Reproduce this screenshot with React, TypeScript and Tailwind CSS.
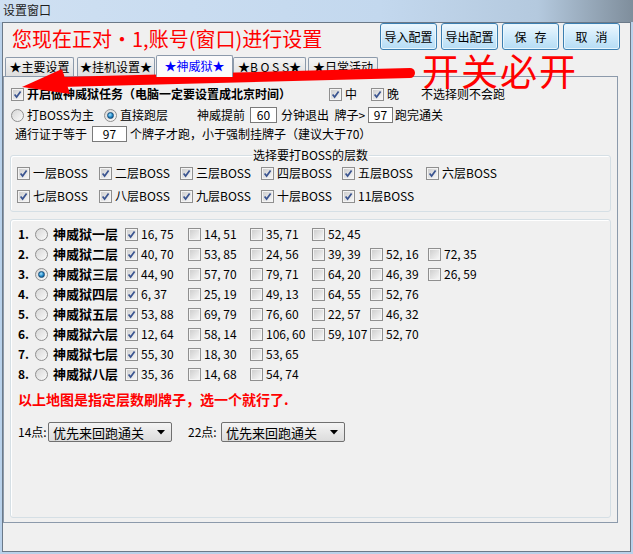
import React from 'react';

// small win7-ish controls
const Check = ({ checked }: { checked?: boolean }) => (
  <span className="relative inline-flex h-[13px] w-[13px] shrink-0 border border-[#8f8f8f] bg-[#f4f4f4] p-[1px]">
    <span className="block h-full w-full bg-linear-to-br from-[#cfcfcf] to-[#f6f6f6]" />
    {checked && (
      <svg className="absolute left-[1px] top-[1px]" width="9" height="9" viewBox="0 0 9 9">
        <path d="M1.6 4.4 L3.6 7 L7.6 1.4" fill="none" stroke="#3a5490" strokeWidth="1.7" />
      </svg>
    )}
  </span>
);

const Radio = ({ on }: { on?: boolean }) => (
  <span className="flex h-[13px] w-[13px] shrink-0 items-center justify-center rounded-full border border-[#8f8f8f] bg-linear-to-br from-[#d6d6d6] to-[#fbfbfb]">
    {on && (
      <span className="h-[7px] w-[7px] rounded-full border border-[#1b4f7a] bg-[radial-gradient(circle_at_40%_35%,#a6e4ff,#1f86c6_55%,#0b3f70)]" />
    )}
  </span>
);

const Input = ({ value, w }: { value: string; w: string }) => (
  <span className={`flex h-[16px] items-center justify-center border border-[#7a7a7a] bg-white text-[12px] leading-none ${w}`}>
    {value}
  </span>
);

const AeroButton = ({ label }: { label: string }) => (
  <button className="h-[27px] w-[57px] whitespace-pre rounded-[3px] border border-[#3c7fb1] bg-linear-to-b from-[#eef8fe] via-[#cfeafb] to-[#b5dcf4] text-[12px] leading-none text-black shadow-[inset_0_0_0_1px_#e8f6fd]">
    {label}
  </button>
);

const Select = () => (
  <div className="flex h-[20px] w-[124px] items-center justify-between rounded-[2px] border border-[#707070] bg-linear-to-b from-[#f4f4f4] to-[#dcdcdc] pl-[4px] pr-[6px] text-[13px] leading-none">
    <span>优先来回跑通关</span>
    <svg width="8" height="5" viewBox="0 0 8 5">
      <path d="M0 0 H8 L4 4.5 Z" fill="#000" />
    </svg>
  </div>
);

const floors = [
  { n: '1.', name: '神威狱一层', on: false, pts: ['16,75', '14,51', '35,71', '52,45'] },
  { n: '2.', name: '神威狱二层', on: false, pts: ['40,70', '53,85', '24,56', '39,39', '52,16', '72,35'] },
  { n: '3.', name: '神威狱三层', on: true, pts: ['44,90', '57,70', '79,71', '64,20', '46,39', '26,59'] },
  { n: '4.', name: '神威狱四层', on: false, pts: ['6,37', '25,19', '49,13', '64,55', '52,76'] },
  { n: '5.', name: '神威狱五层', on: false, pts: ['53,88', '69,79', '76,60', '22,57', '46,32'] },
  { n: '6.', name: '神威狱六层', on: false, pts: ['12,64', '58,14', '106,60', '59,107', '52,70'] },
  { n: '7.', name: '神威狱七层', on: false, pts: ['55,30', '18,30', '53,65'] },
  { n: '8.', name: '神威狱八层', on: false, pts: ['35,36', '14,68', '54,74'] },
];

const colW = ['w-[63px]', 'w-[62px]', 'w-[62px]', 'w-[58px]', 'w-[58px]', 'w-[58px]'];

const bossRows = [
  ['一层BOSS', '二层BOSS', '三层BOSS', '四层BOSS', '五层BOSS', '六层BOSS'],
  ['七层BOSS', '八层BOSS', '九层BOSS', '十层BOSS', '11层BOSS'],
];

const tabs = [
  { label: '★主要设置', w: 'w-[69px]', active: false, mr: 'mr-[3px]' },
  { label: '★挂机设置★', w: 'w-[78px]', active: false, mr: 'mr-[1px]' },
  { label: '★神威狱★', w: 'w-[77px]', active: true, mr: 'mr-0' },
  { label: '★B O S S★', w: 'w-[73px]', active: false, mr: 'mr-[2px]' },
  { label: '★日常活动', w: 'w-[70px]', active: false, mr: 'mr-0' },
];

export default function App() {
  return (
    <div className="relative h-[554px] w-[633px] overflow-hidden bg-[#b9d1ea] font-['Noto_Sans_CJK_SC',sans-serif] text-[12px] text-black">
      {/* title bar */}
      <div className="h-[22px] bg-[linear-gradient(to_right,#cfe0f2_0%,#c3d8ee_60%,#b4c9de_85%,#7f8e9c_100%)] pl-[3px] text-[12px] leading-[19px] text-[#1e1e1e]">
        设置窗口
      </div>

      {/* client */}
      <div className="ml-[2px] h-[530px] w-[629px] border border-[#6b7988] bg-[#f0f0f0]">
        {/* header */}
        <div className="flex h-[31px] items-start">
          <div className="pl-[9px] pt-[4px] text-[20px] leading-[24px] text-[#ff0000]">您现在正对・1,账号(窗口)进行设置</div>
          <div className="ml-auto flex gap-[4px] pr-[10px]">
            <AeroButton label="导入配置" />
            <AeroButton label="导出配置" />
            <AeroButton label="保   存" />
            <AeroButton label="取   消" />
          </div>
        </div>

        {/* tabs */}
        <div className="flex h-[22px] items-end pl-[2px]">
          {tabs.map((t) =>
            t.active ? (
              <div
                key={t.label}
                className={`relative z-10 -mb-px flex h-[22px] items-center justify-center rounded-t-[2px] border border-b-0 border-[#8c9aab] bg-[#fbfbfb] pb-[2px] text-[12px] leading-none text-[#0000ff] ${t.w} ${t.mr}`}
              >
                {t.label}
              </div>
            ) : (
              <div
                key={t.label}
                className={`flex h-[19px] items-center justify-center whitespace-pre rounded-t-[2px] border border-b-0 border-[#8c9aab] bg-linear-to-b from-[#f5f5f5] to-[#dedede] text-[12px] leading-none ${t.w} ${t.mr}`}
              >
                {t.label}
              </div>
            ),
          )}
        </div>

        {/* tab panel */}
        <div className="h-[447px] w-[615px] border border-[#8c9aab] bg-[#f0f0f0] pt-[9px]">
          {/* row 1 */}
          <div className="flex h-[16px] items-center pl-[7px]">
            <div className="flex w-[318px] items-center gap-[3px]">
              <Check checked />
              <span className="font-bold">开启做神威狱任务（电脑一定要设置成北京时间）</span>
            </div>
            <div className="flex w-[42px] items-center gap-[3px]">
              <Check checked />
              <span>中</span>
            </div>
            <div className="flex w-[50px] items-center gap-[3px]">
              <Check checked />
              <span>晚</span>
            </div>
            <span>不选择则不会跑</span>
          </div>

          {/* row 2 */}
          <div className="mt-[5px] flex h-[16px] items-center pl-[7px]">
            <div className="flex w-[93px] items-center gap-[3px]">
              <Radio />
              <span>打BOSS为主</span>
            </div>
            <div className="flex w-[93px] items-center gap-[3px]">
              <Radio on />
              <span>直接跑层</span>
            </div>
            <span className="w-[53px]">神威提前</span>
            <Input value="60" w="w-[27px]" />
            <span className="ml-[4px] w-[87px] whitespace-pre">分钟退出  牌子&gt;</span>
            <Input value="97" w="w-[25px]" />
            <span className="ml-[2px]">跑完通关</span>
          </div>

          {/* row 3 */}
          <div className="mt-[3px] flex h-[16px] items-center pl-[11px]">
            <span className="w-[77px]">通行证于等于</span>
            <Input value="97" w="w-[35px]" />
            <span className="ml-[3px]">个牌子才跑，小于强制挂牌子（建议大于70）</span>
          </div>

          {/* boss group */}
          <div className="relative ml-[6px] mt-[13px] h-[57px] w-[601px] rounded-[3px] border border-[#d5dfe5] pl-[6px] pt-[8px] shadow-[inset_1px_1px_0_#ffffff]">
            <span className="absolute left-1/2 top-[-9px] -translate-x-1/2 bg-[#f0f0f0] px-[1px] leading-[16px]">选择要打BOSS的层数</span>
            {bossRows.map((row, ri) => (
              <div key={ri} className={`grid h-[16px] grid-cols-[82px_81px_81px_81px_84px_auto] items-center ${ri ? 'mt-[7px]' : ''}`}>
                {row.map((b) => (
                  <div key={b} className="flex items-center gap-[3px]">
                    <Check checked />
                    <span>{b}</span>
                  </div>
                ))}
              </div>
            ))}
          </div>

          {/* floors group */}
          <div className="ml-[6px] mt-[7px] h-[299px] w-[601px] rounded-[3px] border border-[#d5dfe5] pl-[7px] pt-[4px] shadow-[inset_1px_1px_0_#ffffff]">
            {floors.map((f) => (
              <div key={f.n} className="flex h-[20px] items-center">
                <span className="w-[17px] font-bold">{f.n}</span>
                <Radio on={f.on} />
                <span className="ml-[5px] w-[72px] text-[13px] font-bold">{f.name}</span>
                {f.pts.map((p, i) => (
                  <div key={p + i} className={`flex items-center gap-[3px] ${colW[i]}`}>
                    <Check checked={i === 0} />
                    <span>{p.replace(',', ', ')}</span>
                  </div>
                ))}
              </div>
            ))}
            <div className="mt-[5px] flex h-[20px] items-center text-[14px] font-bold text-[#ff0000]">
              以上地图是指定层数刷牌子，选一个就行了.
            </div>
            <div className="mt-[13px] flex h-[20px] items-center">
              <span className="w-[30px]">14点:</span>
              <Select />
              <span className="ml-[16px] w-[33px]">22点:</span>
              <Select />
            </div>
          </div>
        </div>
      </div>

      {/* red annotation drawn over the window */}
      <svg className="pointer-events-none absolute left-0 top-0" width="633" height="554" viewBox="0 0 633 554">
        <path d="M60 82 L410 73" stroke="#ff0000" strokeWidth="10" strokeLinecap="round" />
        <path d="M22 87 L62 69 L70 94 Z" fill="#ff0000" />
      </svg>
      <div className="pointer-events-none absolute left-[422px] top-[53px] text-[37px] leading-[34px] tracking-[2px] text-[#ff0000]">
        开关必开
      </div>
    </div>
  );
}
